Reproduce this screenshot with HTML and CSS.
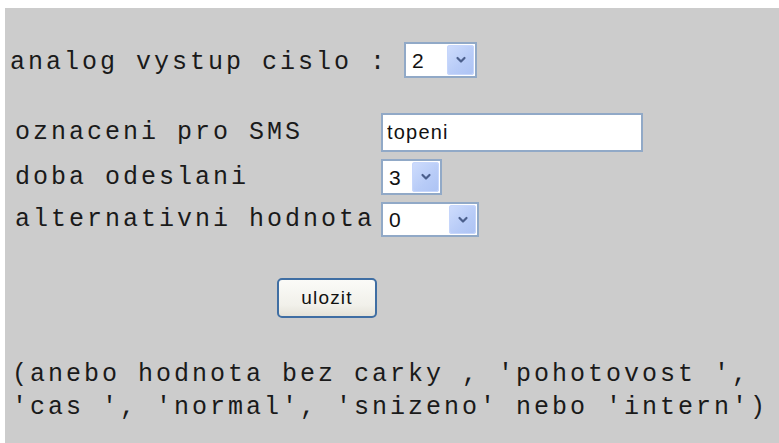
FILE: index.html
```html
<!DOCTYPE html>
<html lang="cs">
<head>
<meta charset="utf-8">
<title>Analog vystup</title>
<link rel="stylesheet" href="styles.css">
</head>
<body>
<div class="panel">
  <form class="form">
    <div class="head">
      <span class="label">analog vystup cislo :</span>
      <span class="combo combo-out">
        <select class="combo-field"><option>1</option><option selected>2</option><option>3</option><option>4</option></select>
        <span class="combo-btn"><svg viewBox="0 0 12 12" width="12" height="12"><path d="M2.5 4 L6 7.5 L9.5 4" fill="none" stroke="#4b5f8c" stroke-width="2.2" stroke-linecap="round" stroke-linejoin="round"/></svg></span>
      </span>
    </div>

    <div class="fields">
      <span class="label">oznaceni pro SMS</span>
      <input class="text-field" type="text" value="topeni">

      <span class="label">doba odeslani</span>
      <span class="combo combo-time">
        <select class="combo-field"><option>1</option><option>2</option><option selected>3</option></select>
        <span class="combo-btn"><svg viewBox="0 0 12 12" width="12" height="12"><path d="M2.5 4 L6 7.5 L9.5 4" fill="none" stroke="#4b5f8c" stroke-width="2.2" stroke-linecap="round" stroke-linejoin="round"/></svg></span>
      </span>

      <span class="label">alternativni hodnota</span>
      <span class="combo combo-alt">
        <select class="combo-field"><option selected>0</option><option>1</option></select>
        <span class="combo-btn"><svg viewBox="0 0 12 12" width="12" height="12"><path d="M2.5 4 L6 7.5 L9.5 4" fill="none" stroke="#4b5f8c" stroke-width="2.2" stroke-linecap="round" stroke-linejoin="round"/></svg></span>
      </span>
    </div>

    <div class="actions">
      <button class="save" type="button">ulozit</button>
    </div>

    <p class="note">(anebo hodnota bez carky , ′pohotovost ′,<br>′cas ′, ′normal′, ′snizeno′ nebo ′intern′)</p>
  </form>
</div>
</body>
</html>
```

FILE: styles.css
```css
html, body {
  margin: 0;
  height: 100%;
  background: #ffffff;
}

body {
  padding: 8px 0 0 5px;
  box-sizing: border-box;
}

.panel {
  background: #cccccc;
  min-height: 100%;
  box-sizing: border-box;
  padding: 34px 0 0 0;
}

.label,
.note {
  font-family: "Courier New", "Nimbus Mono PS", "FreeMono", "Liberation Mono", monospace;
  font-size: 25px;
  letter-spacing: 3px;
  color: #1a1a1a;
  white-space: pre;
}

/* first line: output number picker */
.head {
  display: flex;
  align-items: center;
  gap: 16px;
  height: 36px;
  padding-left: 5px;
}

.head .label {
  position: relative;
  top: 2px;
}

/* label / control pairs */
.fields {
  display: grid;
  grid-template-columns: 362px auto;
  column-gap: 4px;
  row-gap: 7px;
  align-items: center;
  justify-items: start;
  margin-top: 35px;
  padding-left: 10px;
}

.text-field {
  width: 262px;
  height: 39px;
  box-sizing: border-box;
  border: 2px solid #91a9c7;
  background: #ffffff;
  padding: 0 4px;
  font-family: "Liberation Sans", Arial, sans-serif;
  font-size: 20px;
  letter-spacing: 1.2px;
  color: #111111;
  outline: none;
}

/* drop-down: native select with a drawn arrow button laid over its right end */
.combo {
  position: relative;
  display: inline-block;
  height: 36px;
  box-sizing: border-box;
}

.combo-field {
  appearance: none;
  -webkit-appearance: none;
  width: 100%;
  height: 100%;
  box-sizing: border-box;
  border: 2px solid #91a9c7;
  border-radius: 0;
  background: #ffffff;
  padding: 0 0 0 6px;
  font-family: "Liberation Sans", Arial, sans-serif;
  font-size: 21px;
  color: #111111;
  outline: none;
}

.combo-btn {
  position: absolute;
  top: 3px;
  right: 3px;
  bottom: 3px;
  width: 27px;
  border-radius: 3px;
  background: linear-gradient(135deg, #cfddfd 0%, #b7cbf7 60%, #adc3f4 100%);
  box-shadow: inset 0 0 0 1px #c6d6fb;
  display: flex;
  align-items: center;
  justify-content: center;
  pointer-events: none;
}

.combo-out { width: 73px; }
.combo-time { width: 61px; }
.combo-alt { width: 98px; height: 35px; }

.actions {
  margin-top: 41px;
  padding-left: 272px;
}

.save {
  width: 100px;
  height: 40px;
  border: 2px solid #3f6ea3;
  border-radius: 5px;
  background: linear-gradient(180deg, #fbfbf8 0%, #f1f0ea 70%, #e4e2d8 100%);
  font-family: "Liberation Sans", Arial, sans-serif;
  font-size: 19px;
  letter-spacing: 1.2px;
  color: #111111;
  padding: 0;
}

.note {
  margin: 40px 0 0 0;
  padding-left: 7px;
  line-height: 33px;
}
```
